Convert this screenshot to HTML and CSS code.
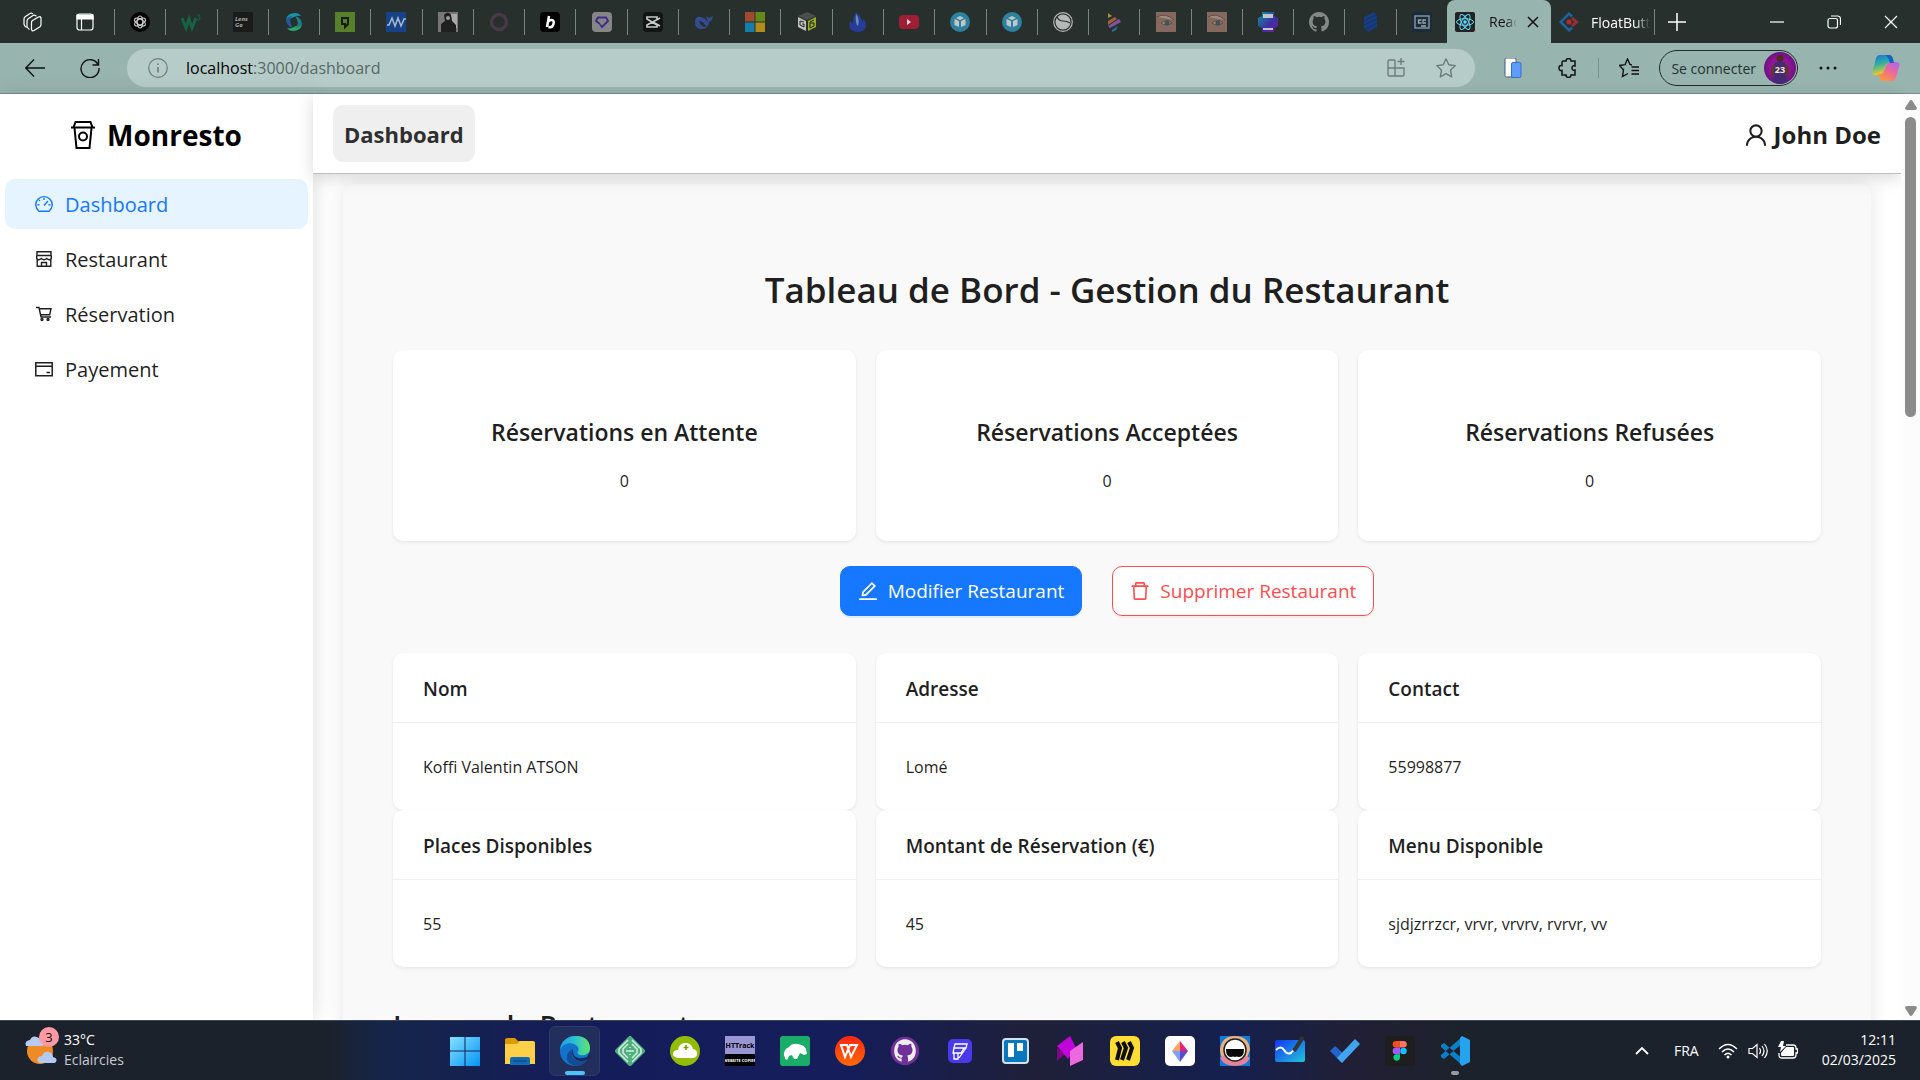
FILE: index.html
```html
<!DOCTYPE html>
<html lang="fr">
<head>
<meta charset="utf-8">
<meta name="viewport" content="width=device-width, initial-scale=1">
<title>Monresto - Dashboard</title>
<link rel="stylesheet" href="styles.css">
</head>
<body>
<div class="screen">

  <!-- Browser tab strip -->
  <header class="tabstrip">
    <div class="strip-tools">
      <button class="icon-btn" aria-label="Espaces de travail"><svg viewBox="0 0 20 20" class="i20 line"><path d="M3.500 15.500Q1 14 1 12V7q0-1.500 1.500-2.500L7 1.500q1-.7 2.500 0l.5.500M6.500 17.500Q4 16 4 14V9q0-1.500 1.500-2.500L10 3.500q1-.7 2.500 0l1 .7M9.500 8.500L15.500 5q2.500-1 2.500 1.500v6q0 1.500-1 2.200L11 18.500q-2.500 1-2.500-1.500v-6.500q0-1.200 1-2z"/></svg></button>
      <button class="icon-btn" aria-label="Onglets"><svg viewBox="0 0 20 20" class="i20 line"><rect x="2" y="2" width="16" height="16" rx="2.500"/><path d="M2 3h16v4H2z" fill="currentColor"/><path d="M6.500 7v11"/></svg></button>
    </div>
    <nav class="pinned" aria-label="Onglets épinglés">
      <a href="#"><svg viewBox="0 0 20 20" class="i20"><circle cx="10" cy="10" r="10" fill="#000"/><g fill="none" stroke="#ccc" stroke-width="1.200"><ellipse cx="10" cy="10" rx="2.800" ry="6"/><ellipse cx="10" cy="10" rx="2.800" ry="6" transform="rotate(60 10 10)"/><ellipse cx="10" cy="10" rx="2.800" ry="6" transform="rotate(120 10 10)"/></g></svg></a>
      <a href="#"><svg viewBox="0 0 20 20" class="i20"><path d="M1 6l4 10 3-9 3 9 4-10" fill="none" stroke="#176246" stroke-width="3"/><path d="M16 3h3l-1.500 2q2 0 1.500 2t-3 1" fill="none" stroke="#176246"/></svg></a>
      <a href="#"><svg viewBox="0 0 20 20" class="i20"><path fill="#191c1b" d="M0 0h20v20H0z"/><text x="2" y="9" class="fav-word">Lens</text><text x="2" y="15" class="fav-word">Go</text></svg></a>
      <a href="#"><svg viewBox="0 0 20 20" class="i20"><path d="M2 8Q3 1 11 1q4 0 6 3-4-1-7 1-4 2-8 3z" fill="#1a93a5"/><path d="M2 7q3-3 6-3-4 5 1 12-7-2-7-9z" fill="#2358a0"/><path d="M18 12q-1 7-9 7-4 0-6-3 4 1 7-1 4-2 8-3z" fill="#2aa568"/><path d="M18 13q-3 3-6 3 4-5-1-12 7 2 7 9z" fill="#1b7f86"/></svg></a>
      <a href="#"><svg viewBox="0 0 20 20" class="i20"><path fill="#587f29" d="M0 0h20v20H0z"/><path d="M7 6h6v6l-3 3v-3H7z" fill="none" stroke="#141c10" stroke-width="2"/></svg></a>
      <a href="#"><svg viewBox="0 0 20 20" class="i20"><path fill="#174285" d="M0 0h20v20H0z"/><path d="M1 13h2l3-7 3 8 3-8 3 8 3-7h2" fill="none" stroke="#a9b8cd" stroke-width="1.500"/></svg></a>
      <a href="#"><svg viewBox="0 0 20 20" class="i20"><path fill="#777" d="M0 0h20v20H0z"/><path fill="#aaa" d="M13 2h6v14h-4z"/><path fill="#202020" d="M6 3q4-5 7 0l1 6 4 4v7H3v-8l4-3z"/><circle cx="10" cy="6" r="2" fill="#999"/></svg></a>
      <a href="#"><svg viewBox="0 0 20 20" class="i20"><circle cx="10" cy="10" r="7.500" fill="none" stroke="#493847" stroke-width="3.500"/></svg></a>
      <a href="#"><svg viewBox="0 0 20 20" class="i20"><rect width="20" height="20" rx="4" fill="#000"/><path d="M9 4L7 15M7.500 11q1-3 4-3t2 4-5 3" fill="none" stroke="#fff" stroke-width="2.500"/></svg></a>
      <a href="#"><svg viewBox="0 0 20 20" class="i20"><rect width="20" height="20" rx="4" fill="#858786"/><path d="M8 12l-4-3 2-3.500h8L16 9l-6 6-2-2.500" fill="none" stroke="#412c88" stroke-width="2"/></svg></a>
      <a href="#"><svg viewBox="0 0 20 20" class="i20"><rect width="20" height="20" rx="4" fill="#111514"/><path d="M17 6l-13 7v2h10v-2L4 7V5h10v2M10 10l7 4" fill="none" stroke="#c6c8c7" stroke-width="1.700"/></svg></a>
      <a href="#"><svg viewBox="0 0 20 20" class="i20"><path d="M1 10q0-6 6-5 4 1 7 5l-2-6 3 2 4-2-1 4-3 2q-1 8-9 7-5-1-5-7z" fill="#344a91"/><path d="M5 9q5 0 7 6-5 0-7-6z" fill="#27302d"/></svg></a>
      <a href="#"><svg viewBox="0 0 20 20" class="i20"><path fill="#a24932" d="M0 0h9.500v9.500H0z"/><path fill="#64881a" d="M10.500 0H20v9.500h-9.500z"/><path fill="#157faa" d="M0 10.500h9.500V20H0z"/><path fill="#b58b19" d="M10.500 10.500H20V20h-9.500z"/></svg></a>
      <a href="#"><svg viewBox="0 0 20 20" class="i20"><path d="M1 4l9-4 9 4-9 4z" fill="#4c4f4e"/><path d="M1 5l8 4v10l-8-4z" fill="#bfc1bf"/><path d="M19 5l-8 4v10l8-4z" fill="#9bad23"/><path d="M7 10l-4-1v4l4 2v-3H5M17 8l-4 2v6l4-2v-3h-4" fill="none" stroke="#202724"/></svg></a>
      <a href="#"><svg viewBox="0 0 20 20" class="i20"><path d="M8 0q6 5 6 10 1-2 2-3 6 12-6 13-11 0-8-11 2 1 3 3 0-7 3-12z" fill="#263c98"/><path d="M8 2q4 5 2 12-3-2-2-12z" fill="#648cbd"/></svg></a>
      <a href="#"><svg viewBox="0 0 20 20" class="i20"><rect y="3" width="20" height="14" rx="4" fill="#9f1e36"/><path d="M8 7l4 3-4 3z" fill="#ddd"/></svg></a>
      <a href="#"><svg viewBox="0 0 20 20" class="i20"><circle cx="10" cy="10" r="10" fill="#2f7f9e"/><path d="M10 4l4 2-4 2-4-2zM4.500 7L9 9v6l-4.500-2zM15.500 7L11 9v6l4.500-2z" fill="#bfc7ca"/></svg></a>
      <a href="#"><svg viewBox="0 0 20 20" class="i20"><circle cx="10" cy="10" r="10" fill="#2f7f9e"/><path d="M10 4l4 2-4 2-4-2zM4.500 7L9 9v6l-4.500-2zM15.500 7L11 9v6l4.500-2z" fill="#bfc7ca"/></svg></a>
      <a href="#"><svg viewBox="0 0 20 20" class="i20"><circle cx="10" cy="10" r="9.300" fill="none" stroke="#b6b8b7" stroke-width="1.200"/><circle cx="10" cy="10" r="7.500" fill="#b6b8b7"/><path d="M4 5q2 4 6 4t7 2" fill="none" stroke="#27302d" stroke-width="1.200"/></svg></a>
      <a href="#"><svg viewBox="0 0 20 20" class="i20"><path d="M4 1l4 3-4 2z" fill="#a48e37"/><path d="M4 9l7-4 2 2-9 6z" fill="#a55f38"/><path d="M4 14l11-7 2 3-11 6z" fill="#8353a0"/><path d="M8 18l6-4-2 4-4 2z" fill="#386da0"/></svg></a>
      <a href="#"><svg viewBox="0 0 20 20" class="i20"><path fill="#85695e" d="M0 0h20v20H0z"/><path d="M1 5q8-5 17 3M5 11q6-5 11 0-6 4-11 0" fill="#a08a80" stroke="#5f4c45"/><circle cx="11" cy="11" r="2.500" fill="#3b5558"/></svg></a>
      <a href="#"><svg viewBox="0 0 20 20" class="i20"><path fill="#85695e" d="M0 0h20v20H0z"/><path d="M1 5q8-5 17 3M5 11q6-5 11 0-6 4-11 0" fill="#a08a80" stroke="#5f4c45"/><circle cx="11" cy="11" r="2.500" fill="#3b5558"/></svg></a>
      <a href="#"><svg viewBox="0 0 20 20" class="i20"><defs><linearGradient id="printer" x2="1" y2="1"><stop stop-color="#079998"/><stop offset=".6" stop-color="#412ca5"/><stop offset="1" stop-color="#7022a0"/></linearGradient></defs><path d="M4 0h12v4l4 2v8l-4 2v4H4v-4l-4-2V6l4-2z" fill="url(#printer)"/><path d="M5 2h10v4H5zM5 16h10v2H5z" fill="#c0c4cd"/></svg></a>
      <a href="#"><svg viewBox="0 0 16 16" class="i20"><path fill="#858987" d="M8 0C3.580 0 0 3.580 0 8c0 3.540 2.290 6.530 5.470 7.590.4.070.55-.17.55-.38 0-.19-.01-.82-.01-1.490-2.010.37-2.530-.49-2.690-.94-.09-.23-.48-.94-.82-1.130-.28-.15-.68-.52-.01-.53.63-.01 1.080.58 1.230.82.72 1.210 1.870.87 2.330.66.07-.52.28-.87.51-1.070-1.780-.2-3.640-.89-3.640-3.950 0-.87.31-1.590.82-2.150-.08-.2-.36-1.020.08-2.120 0 0 .67-.21 2.200.82a7.600 7.600 0 014 0c1.530-1.040 2.200-.82 2.200-.82.44 1.100.16 1.920.08 2.120.51.56.82 1.270.82 2.150 0 3.070-1.870 3.750-3.650 3.950.29.25.54.73.54 1.480 0 1.070-.01 1.930-.01 2.200 0 .21.15.46.55.38A8 8 0 0016 8c0-4.420-3.580-8-8-8z"/></svg></a>
      <a href="#"><svg viewBox="0 0 20 20" class="i20"><path d="M3 5l10-5 3 4v11l-9 5-4-4z" fill="#173d80"/><path d="M3 9l12-6M3 13l13-6M4 17l12-6" stroke="#123468"/></svg></a>
      <a href="#"><svg viewBox="0 0 20 20" class="i20"><path fill="#1a2c3c" d="M0 0h20v20H0z"/><path d="M3 4h14v12H3z" fill="none" stroke="#858f96" stroke-width="1.500"/><path d="M9.500 8h-3v3h3M14 8h-3v3h3M9 14h5" fill="none" stroke="#9da4a9" stroke-width="1.300"/></svg></a>
    </nav>
    <div class="tab tab-active">
      <svg viewBox="0 0 20 20" class="i20"><rect width="20" height="20" rx="2" fill="#222"/><g fill="none" stroke="#61dafb"><ellipse cx="10" cy="10" rx="8.500" ry="3.300"/><ellipse cx="10" cy="10" rx="8.500" ry="3.300" transform="rotate(60 10 10)"/><ellipse cx="10" cy="10" rx="8.500" ry="3.300" transform="rotate(120 10 10)"/></g><circle cx="10" cy="10" r="1.800" fill="#61dafb"/></svg>
      <span class="tab-title fade">React App</span>
      <button class="icon-btn" aria-label="Fermer l'onglet"><svg viewBox="0 0 12 12" class="i12 line"><path d="M1 1l10 10M11 1L1 11" stroke-width="1.500"/></svg></button>
    </div>
    <div class="tab tab-next">
      <svg viewBox="0 0 20 20" class="i20"><path d="M14 3.500L10 0 0 10l10 10 4-3.500-2-2-2 2L3.500 10 10 3.500l2 2z" fill="#1e63a0"/><path d="M14 5l6 5-6 5-2-2 3-3-3-3z" fill="#8f3039"/><circle cx="10" cy="10" r="2.600" fill="#b02c32"/></svg>
      <span class="tab-title fade">FloatButton</span>
    </div>
    <button class="icon-btn new-tab" aria-label="Nouvel onglet"><svg viewBox="0 0 18 18" class="i18 line"><path d="M9 0v18M0 9h18" stroke-width="1.500"/></svg></button>
    <div class="window-controls">
      <button class="icon-btn" aria-label="Réduire"><svg viewBox="0 0 14 14" class="i14 line"><path d="M0 7h14"/></svg></button>
      <button class="icon-btn" aria-label="Restaurer"><svg viewBox="0 0 14 14" class="i14 line"><rect x="1" y="3.500" width="9.500" height="9.500" rx="2"/><path d="M4 1h6.500q3 0 3 3v6"/></svg></button>
      <button class="icon-btn" aria-label="Fermer"><svg viewBox="0 0 14 14" class="i14 line"><path d="M1 1l12 12M13 1L1 13"/></svg></button>
    </div>
  </header>

  <!-- Address bar -->
  <div class="toolbar">
    <div class="nav-buttons">
      <button class="icon-btn" aria-label="Précédent"><svg viewBox="0 0 20 20" class="i20 line"><path d="M9 1.500L.8 10 9 18.500M1 10h19" stroke-width="1.400"/></svg></button>
      <button class="icon-btn" aria-label="Actualiser"><svg viewBox="0 0 20 20" class="i20 line"><path d="M18.500 1v6h-6M18 6.500A9 9 0 1 0 19 10" stroke-width="1.400"/></svg></button>
    </div>
    <div class="address">
      <svg viewBox="0 0 20 20" class="i20 line"><circle cx="10" cy="10" r="9.300"/><path d="M10 9v5.500M10 5.500v1.500" stroke-width="1.600"/></svg>
      <a class="url" href="#"><span class="url-host">localhost</span>:3000/dashboard</a>
      <button class="icon-btn" aria-label="Installer l'application"><svg viewBox="0 0 20 20" class="i20 line"><path d="M9 2H3.500Q2 2 2 3.500v13Q2 18 3.500 18H16.500q1.500 0 1.500-1.500V10H2M9 2v16M15 0v7M11.500 3.500h7" stroke-width="1.400"/></svg></button>
      <button class="icon-btn star" aria-label="Favori"><svg viewBox="0 0 20 20" class="i20 line"><path d="M10 .8l2.800 6 6.500.8-4.800 4.600 1.200 6.600L10 15.600l-5.700 3.200 1.200-6.600L.7 7.600l6.500-.8z" stroke-linejoin="round" stroke-width="1.400"/></svg></button>
    </div>
    <div class="extensions">
      <button class="icon-btn" aria-label="Mobile"><svg viewBox="0 0 20 20" class="i20"><rect x="2" y="0" width="11" height="19" rx="1.500" fill="#fff" stroke="#3f5d78"/><rect x="8.500" y="4.500" width="9.500" height="15" rx="1.500" fill="#5c9dfb" stroke="#3a6ec4"/></svg></button>
      <button class="icon-btn" aria-label="Extensions"><svg viewBox="0 0 20 20" class="i20 line"><path d="M5 3h3q0-2.500 2.500-2.500T13 3h4v5q-3-1-3 2t3 2v5h-4q0 2.500-2.500 2.500T8 17H4v-4.500Q1 13 1 10t3-2.500V4z" stroke-width="1.500"/></svg></button>
      <span class="divider"></span>
      <button class="icon-btn" aria-label="Favoris"><svg viewBox="0 0 20 20" class="i20 line"><path d="M13 7l-2-.5L8.500 1 6 6.700l-5.500.8 4 4.200-1 6.800 5.500-3M12.500 9H20M12.500 12.500H20M12.500 16H20" stroke-width="1.400"/></svg></button>
    </div>
    <button class="profile">Se connecter
      <svg viewBox="0 0 32 32" class="avatar"><defs><radialGradient id="glow"><stop stop-color="#c717bd"/><stop offset="1" stop-color="#6d1180"/></radialGradient></defs><circle cx="16" cy="16" r="16" fill="url(#glow)"/><path d="M7 15l5-5h8l5 5-1 11-3-4H11l-3 4z" fill="#61372c"/><path d="M11 10h10l2 20q-7 3-14 0z" fill="#442b78"/><circle cx="16" cy="6.500" r="3.500" fill="#4c2921"/><text x="16" y="21" text-anchor="middle" class="jersey">23</text></svg>
    </button>
    <button class="icon-btn more" aria-label="Paramètres"><svg viewBox="0 0 18 4" class="dots"><circle cx="2" cy="2" r="1.500"/><circle cx="9" cy="2" r="1.500"/><circle cx="16" cy="2" r="1.500"/></svg></button>
    <button class="icon-btn copilot" aria-label="Copilot"><svg viewBox="0 0 28 28" class="i28"><defs><linearGradient id="cpa" x2=".3" y2="1"><stop stop-color="#1473d9"/><stop offset=".5" stop-color="#32afa1"/><stop offset="1" stop-color="#f5cf20"/></linearGradient><linearGradient id="cpb" x1="1" x2=".3" y2="1"><stop stop-color="#9d6cf7"/><stop offset=".5" stop-color="#ec67a0"/><stop offset="1" stop-color="#fb973e"/></linearGradient></defs><path d="M8 1h9q3 0 4 4l1 4h-5q-3 0-4 4l-2 6q-1 2-4 2H3q-4 0-2-5L4 4q1-3 4-3z" fill="url(#cpa)"/><path d="M20 27h-9q-3 0-4-4l-1-3q4 1 6-3l3-7q1-2 4-2h5q5 0 3 5l-3 10q-1 4-4 4z" fill="url(#cpb)"/><path d="M13 1h4q3 0 4 4l1 4h-4q-2-7-5-8z" fill="#1760c4"/></svg></button>
  </div>

  <!-- Web application -->
  <div class="app">
    <aside class="sidebar">
      <div class="brand">
        <svg viewBox="0 0 24 28" class="brand-icon"><path d="M4.500 1h15l2 5.500h-19zM0 6.500h24M3.500 7l2 20h13l2-20" fill="none" stroke="currentColor" stroke-width="2"/><circle cx="12" cy="15.500" r="4" fill="none" stroke="currentColor" stroke-width="2"/></svg>
        <span>Monresto</span>
      </div>
      <nav class="menu">
        <a class="menu-item selected" href="#"><svg viewBox="0 0 18 18" class="i18 line"><path d="M4 16.300A8.200 8.200 0 1 1 14 16.300z" stroke-width="1.400"/><path d="M9 3v2M4 5l1 1M2.500 9.700h2M13.500 9.700h2M9 10.500L13 6" stroke-width="1.400"/></svg>Dashboard</a>
        <a class="menu-item" href="#"><svg viewBox="0 0 18 18" class="i18 line"><path d="M2 1.700h14v3.800H2zM1.700 5.500v3q2 2.500 4.500 0 2.800 2.500 5.600 0 2.500 2.500 4.500 0v-3M2.200 9v7.300h13.600V9M6.500 16v-3.500h5V16" stroke-width="1.400"/></svg>Restaurant</a>
        <a class="menu-item" href="#"><svg viewBox="0 0 18 18" class="i18 line"><path d="M1 2.500h3l2 9.500h10M4.500 3.700H16l-1.300 6H5.500" stroke-width="1.400"/><circle cx="7" cy="14.500" r="1" stroke-width="1.400"/><circle cx="13" cy="14.500" r="1" stroke-width="1.400"/></svg>Réservation</a>
        <a class="menu-item" href="#"><svg viewBox="0 0 18 18" class="i18 line"><path d="M.8 2.800h16.400v13H.8zM1 6.300h16M11.500 12.500h3.500" stroke-width="1.500"/></svg>Payement</a>
      </nav>
    </aside>

    <div class="main">
      <header class="app-header">
        <button class="crumb">Dashboard</button>
        <a class="user" href="#"><svg viewBox="64 64 896 896" class="user-icon"><path d="M858.500 763.600a374 374 0 00-80.600-119.500 375.630 375.630 0 00-119.500-80.600c-.4-.2-.8-.3-1.200-.5C719.500 518 760 444.700 760 362c0-137-111-248-248-248S264 225 264 362c0 82.700 40.500 156 102.800 201.100-.4.2-.8.3-1.200.5-44.800 18.900-85 46-119.500 80.600a375.630 375.630 0 00-80.600 119.500A371.700 371.700 0 00136 901.800a8 8 0 008 8.200h60c4.400 0 7.900-3.500 8-7.800 2-77.200 33-149.500 87.800-204.300 56.700-56.700 132-87.900 212.200-87.900s155.500 31.200 212.200 87.900C779 752.700 810 825 812 902.200c.1 4.400 3.600 7.800 8 7.800h60a8 8 0 008-8.200c-1-47.800-10.900-94.300-29.500-138.200zM512 534c-45.900 0-89.100-17.900-121.600-50.400S340 407.900 340 362c0-45.900 17.900-89.100 50.400-121.600S466.100 190 512 190s89.100 17.900 121.600 50.400S684 316.100 684 362c0 45.900-17.900 89.100-50.400 121.600S557.900 534 512 534z"/></svg>John Doe</a>
      </header>

      <main class="content">
        <section class="panel">
          <h1>Tableau de Bord - Gestion du Restaurant</h1>
          <div class="cards">
            <article class="card stat"><h2>Réservations en Attente</h2><p>0</p></article>
            <article class="card stat"><h2>Réservations Acceptées</h2><p>0</p></article>
            <article class="card stat"><h2>Réservations Refusées</h2><p>0</p></article>
          </div>
          <div class="actions">
            <button class="btn btn-primary"><svg viewBox="64 64 896 896" class="i20"><path d="M257.700 752c2 0 4-.2 6-.5L431.900 722c2-.4 3.900-1.300 5.300-2.800l423.900-423.900a9.960 9.960 0 000-14.100L694.900 114.900c-1.900-1.900-4.400-2.900-7.100-2.900s-5.200 1-7.100 2.900L256.800 538.800c-1.500 1.500-2.400 3.300-2.800 5.300l-29.500 168.200a33.500 33.500 0 009.400 29.800c6.600 6.400 14.900 9.900 23.800 9.900zm67.400-174.400L687.800 215l73.300 73.300-362.700 362.600-88.900 15.700 15.600-89zM880 836H144c-17.700 0-32 14.300-32 32v36c0 4.400 3.600 8 8 8h784c4.400 0 8-3.600 8-8v-36c0-17.700-14.300-32-32-32z"/></svg>Modifier Restaurant</button>
            <button class="btn btn-danger"><svg viewBox="64 64 896 896" class="i20"><path d="M360 184h-8c4.400 0 8-3.600 8-8v8h304v-8c0 4.400 3.600 8 8 8h-8v72h72v-80c0-35.300-28.700-64-64-64H352c-35.300 0-64 28.700-64 64v80h72v-72zm504 72H160c-17.700 0-32 14.300-32 32v32c0 4.400 3.600 8 8 8h60.400l24.700 523c1.600 34.100 29.800 61 63.900 61h454c34.200 0 62.300-26.800 63.900-61l24.700-523H888c4.400 0 8-3.600 8-8v-32c0-17.700-14.300-32-32-32zM731.300 840H292.700l-24.200-512h487l-24.200 512z"/></svg>Supprimer Restaurant</button>
          </div>
          <div class="cards details">
            <article class="card"><h3>Nom</h3><p>Koffi Valentin ATSON</p></article>
            <article class="card"><h3>Adresse</h3><p>Lomé</p></article>
            <article class="card"><h3>Contact</h3><p>55998877</p></article>
            <article class="card"><h3>Places Disponibles</h3><p>55</p></article>
            <article class="card"><h3>Montant de Réservation (€)</h3><p>45</p></article>
            <article class="card"><h3>Menu Disponible</h3><p>sjdjzrrzcr, vrvr, vrvrv, rvrvr, vv</p></article>
          </div>
          <h2 class="gallery-title">Images du Restaurant</h2>
        </section>
      </main>
    </div>

    <div class="scrollbar" aria-hidden="true">
      <svg viewBox="0 0 12 10" class="arrow"><path d="M6 0q1 0 1.500 1L12 8q0 2-2 2H2Q0 10 0 8l4.500-7Q5 0 6 0z"/></svg>
      <div class="track"><div class="thumb"></div></div>
      <svg viewBox="0 0 12 10" class="arrow"><path d="M6 10q1 0 1.500-1L12 2q0-2-2-2H2Q0 0 0 2l4.500 7Q5 10 6 10z"/></svg>
    </div>
  </div>

  <!-- Windows taskbar -->
  <footer class="taskbar">
    <div class="weather">
      <div class="weather-icon">
        <svg viewBox="0 0 34 34"><circle cx="15" cy="20" r="13" fill="#ef8b24"/><path d="M1 15q-2-5 4-6 2-5 7-3 3 1 3 4 5 1 3 5z" fill="#b7caf2"/><path d="M15 32q-4-1-2-5 1-2 4-2 2-5 7-4 4 1 4 5 5 1 3 5-1 1-2 1z" fill="#b3c9f0"/></svg>
        <span class="badge">3</span>
      </div>
      <div class="weather-text"><span>33°C</span><span class="muted">Eclaircies</span></div>
    </div>
    <nav class="apps" aria-label="Applications">
      <a href="#"><svg viewBox="0 0 30 30" class="i30"><defs><linearGradient id="win" x2="1" y2="1"><stop stop-color="#84e1ff"/><stop offset="1" stop-color="#0594f5"/></linearGradient></defs><path d="M0 1h14.500v13.500H0zM15.500 1H30v13.500H15.500zM0 15.500h14.500V30H0zM15.500 15.500H30V30H15.500z" fill="url(#win)"/></svg></a>
      <a href="#"><svg viewBox="0 0 30 30" class="i30"><path d="M0 4q0-2 2-2h8l3 3h15v10H0z" fill="#d99a06"/><path d="M0 8h12l3-3h13q2 0 2 2v21H0z" fill="#ffcf48"/><path d="M5 29v-6q0-2 2-2h16q2 0 2 2v6z" fill="#126bb4"/><path d="M8 25h14" stroke="#0c4379"/></svg></a>
      <a href="#" class="running"><svg viewBox="0 0 30 30" class="i30"><defs><linearGradient id="edge" x2="1"><stop stop-color="#1c9de6"/><stop offset=".5" stop-color="#2bc3cf"/><stop offset="1" stop-color="#63e46a"/></linearGradient></defs><circle cx="15" cy="15" r="15" fill="#1173cc"/><path d="M0 14C1-4 30-5 30 12c0 7-9 9-12 6-2-2 2-3 0-7C14 5 3 6 0 14z" fill="url(#edge)"/><path d="M13 13c-4 8 4 15 14 10q1 0 0 1-5 6-12 6-10-3-8-11 1-4 6-6z" fill="#124d93"/><path d="M13 13q-1 7 5 9 4 1 9-1l3-5v6l-4 2Q17 27 13 20q-2-4 0-7z" fill="#17275a"/></svg></a>
      <a href="#"><svg viewBox="0 0 30 30" class="i30"><path d="M15 2l13 13-13 13L2 15z" fill="#4eb07e" stroke="#4eb07e" stroke-width="4" stroke-linejoin="round"/><path d="M13 4L4 13v4l9 9M17 4l9 9v4l-9 9M13 8l-5 5v4l5 5M17 8l5 5v4l-5 5M11 15h8M15 11v1M15 18v1" fill="none" stroke="#d6eee1" stroke-width="1.500"/></svg></a>
      <a href="#"><svg viewBox="0 0 30 30" class="i30"><circle cx="15" cy="15" r="15" fill="#92bd04"/><path d="M8 22q-6-1-5-5 1-3 5-3 1-8 9-7 5 1 6 6 5 1 4 6-1 3-4 3z" fill="#fff"/><path d="M16 9v5M13.500 11.500h5" stroke="#7a9f02" stroke-width="1.500"/></svg></a>
      <a href="#"><svg viewBox="0 0 30 30" class="i30"><path fill="#9a96d4" d="M0 0h30v18H0z"/><path fill="#000" d="M0 18h30v12H0z"/><text x="15" y="12" text-anchor="middle" class="ht-top">HTTrack</text><text x="15" y="26" text-anchor="middle" class="ht-bottom">WEBSITE COPIER</text></svg></a>
      <a href="#"><svg viewBox="0 0 30 30" class="i30"><rect width="30" height="30" rx="3" fill="#19ad68"/><path d="M4 22q-1-9 5-11 3-4 9-3 6 1 8 5l1 5-3 1-4-2-3 6h-3l-2-4-3 1-2 4-2-1v-4z" fill="#fff"/></svg></a>
      <a href="#"><svg viewBox="0 0 30 30" class="i30"><defs><linearGradient id="wps" y2="1" x2="0"><stop stop-color="#ff2512"/><stop offset="1" stop-color="#ff6a04"/></linearGradient></defs><circle cx="15" cy="15" r="15" fill="url(#wps)"/><path d="M6 9h6l4 12 6-12h-7l-5 12z" fill="none" stroke="#fff" stroke-width="2"/></svg></a>
      <a href="#"><svg viewBox="-1 -1 18 18" class="i30"><circle cx="8" cy="8" r="8.500" fill="#71309a"/><path fill="#eee" d="M8 1C4.100 1 1.500 4 1.500 8c0 3 1.500 5.500 4.500 6.500v-2q-2 .3-2.700-1.500l1 .1q1 1.500 2 .6.100-.6.500-.9C4.500 10.500 3.500 9.500 3.500 7.300q0-1 .7-1.800-.2-1 .1-1.800 1 0 2 .8 1.700-.4 3.400 0 1-.8 2-.8.3.8.100 1.800.7.800.7 1.800c0 2.200-1 3.200-3.300 3.500q.6.500.6 1.400v2.300c3-1 4.700-3.500 4.700-6.500 0-4-2.600-7-6.500-7z"/></svg></a>
      <a href="#"><svg viewBox="0 0 30 30" class="i30"><rect x="3" y="3" width="24" height="24" rx="5" fill="#4a38eb"/><path d="M10 8h12l-1 4H9zM9 12l-1 5h8l3-5M9 17v6h4v-6M21 12l-7 10" fill="none" stroke="#fff" stroke-width="1.300"/></svg></a>
      <a href="#"><svg viewBox="0 0 30 30" class="i30"><rect x="3" y="3" width="25" height="24" rx="3" fill="#0878bd" stroke="#d5e2ee" stroke-width="2"/><path d="M8 7h6v14H8zM17 7h6v8h-6z" fill="#fff"/></svg></a>
      <a href="#"><svg viewBox="0 0 30 30" class="i30"><path d="M2 12v13l8-7z" fill="#7d0787"/><path d="M2 10L15 0l6 12-8 11z" fill="#c004da"/><path d="M15 15l13-9v18l-13 6z" fill="#ec68dd"/></svg></a>
      <a href="#"><svg viewBox="0 0 30 30" class="i30"><rect width="30" height="30" rx="6" fill="#ffdd33"/><path d="M7 6l3 6-3 12M13 6l3 6-4 12M19 6l3 6-4 12" fill="none" stroke="#0d0d16" stroke-width="4"/></svg></a>
      <a href="#"><svg viewBox="0 0 30 30" class="i30"><rect width="30" height="30" rx="5" fill="#fff"/><path d="M15 5v10H7z" fill="#ffa25c"/><path d="M15 5l8 10h-8z" fill="#e22678"/><path d="M7 15h8v11z" fill="#7aa0fa"/><path d="M23 15h-8v11z" fill="#5e4aca"/></svg></a>
      <a href="#"><svg viewBox="0 0 30 30" class="i30"><path fill="#0c7bdc" d="M0 0h30v30H0z"/><path d="M15 0q14 0 15 14l-4 10H4Q0 20 0 13 2 0 15 0z" fill="#efb17c"/><path d="M0 22q14-9 30 0-4 8-15 8T0 22z" fill="#e78195"/><circle cx="15" cy="14" r="11" fill="#fff" stroke="#222" stroke-width="1.500"/><path d="M6 13h18q0 8-5 8-3-1-4 0-2-1-4 0-5 0-5-8z" fill="#080808"/></svg></a>
      <a href="#"><svg viewBox="0 0 30 30" class="i30"><defs><linearGradient id="wb" y2="1"><stop stop-color="#1236f4"/><stop offset="1" stop-color="#22c5da"/></linearGradient></defs><rect y="4" width="30" height="22" rx="2" fill="url(#wb)"/><path d="M1 14q5-5 8 0t7 3q2-3 3-2" fill="none" stroke="#fff" stroke-width="2"/><path d="M28 1L19 15" stroke="#333" stroke-width="4"/></svg></a>
      <a href="#"><svg viewBox="0 0 30 30" class="i30"><path d="M0 15l5-5 9 8-2 9z" fill="#2264cc"/><path d="M7 22L25 3l5 5-18 19z" fill="#42a3ef"/></svg></a>
      <a href="#"><svg viewBox="0 0 30 30" class="i30"><rect width="30" height="30" rx="2" fill="#1e1e1e"/><path d="M15 5h-4a3.300 3.300 0 0 0 0 6.600h4z" fill="#f24e1e"/><path d="M15 5h3.500a3.300 3.300 0 0 1 0 6.600H15z" fill="#ff7262"/><path d="M15 11.600h-4a3.300 3.300 0 0 0 0 6.600h4z" fill="#a259ff"/><circle cx="18.500" cy="15" r="3.300" fill="#1abcfe"/><path d="M15 18.200h-4a3.300 3.300 0 1 0 4 3.300z" fill="#0acf83"/></svg></a>
      <a href="#" class="background-app"><svg viewBox="0 0 30 30" class="i30"><path d="M1 9l3-2 20 17-2 5-21-18zM1 21l3 2L24 6l-2-5L1 19z" fill="#0a81c7"/><path d="M22 0l8 4v22l-8 4-2-2V2z" fill="#26a3ee"/></svg></a>
    </nav>
    <div class="tray">
      <button class="icon-btn" aria-label="Icônes cachées"><svg viewBox="0 0 14 14" class="i14 line"><path d="M1 10l6-6 6 6" stroke-width="1.800"/></svg></button>
      <span class="lang">FRA</span>
      <div class="status">
        <svg viewBox="0 0 20 20" class="i20 line"><path d="M1 8q9-9 18 0M4 11q6-6 12 0M6.500 14q3.500-3.500 7 0" stroke-width="1.500"/><circle cx="10" cy="16" r="1.500" fill="currentColor" stroke="none"/></svg>
        <svg viewBox="0 0 20 20" class="i20 line"><path d="M1 7.500h3.500L9 3.500v13l-4.500-4H1zM11.500 7q2 3 0 6M14 5q4 5 0 10M16.500 3q5.500 7 0 14" stroke-width="1.200"/></svg>
        <svg viewBox="0 0 20 20" class="i20"><path d="M8 4h7q3 0 3 3v1h1.500v4H18v2q0 3-3 3H4q-3 0-3-3v-2" fill="none" stroke="#fff" stroke-width="1.300"/><path d="M8 6h7q1 0 1 1v7q0 1-1 1H4q-1 0-1-1v-2z" fill="#fff"/><path d="M3 0L0 6h3l-1 5 6-6H5l1-5z" fill="#fff"/></svg>
      </div>
      <div class="clock"><span>12:11</span><span>02/03/2025</span></div>
    </div>
  </footer>
</div>
</body>
</html>
```
FILE: styles.css
```css
* { box-sizing: border-box; }

body {
  margin: 0;
  font-family: "Open Sans", "Noto Sans", sans-serif;
  font-size: 16px;
  color: #1f1f1f;
}

h1, h2, h3, p { margin: 0; }
h1, h2, h3 { font-weight: 600; }
a { color: inherit; text-decoration: none; }
svg { display: block; flex: none; }
button { font: inherit; color: inherit; cursor: pointer; }

.screen {
  display: grid;
  grid-template-rows: 43px 51px minmax(0, 1fr) 60px;
  height: 100vh;
  overflow: hidden;
}

/* Icon sizes */
.i12 { width: 12px; height: 12px; }
.i14 { width: 14px; height: 14px; }
.i18 { width: 18px; height: 18px; }
.i20 { width: 20px; height: 20px; }
.i28 { width: 28px; height: 28px; }
.i30 { width: 30px; height: 30px; }
.line { fill: none; stroke: currentColor; stroke-width: 1.2; }
.icon-btn { display: flex; align-items: center; justify-content: center; padding: 0; border: 0; background: none; }

/* Tab strip */
.tabstrip { display: flex; align-items: stretch; background: #27302d; color: #fff; }
.strip-tools { display: flex; gap: 32px; width: 114px; padding-left: 23px; }
.pinned { display: grid; grid-template-columns: repeat(26, minmax(0, 1fr)); width: 1333px; }
.pinned a { display: flex; align-items: center; justify-content: center; height: 26px; margin-top: 9px; border-left: 1px solid #7c8280; }
.fav-word { font: italic 700 6px "Open Sans", sans-serif; fill: #aaa; }
.tab { display: flex; align-items: center; padding: 0 8px; width: 104px; font-size: 14px; }
.tab-title { flex: 1; min-width: 0; margin: 0 10px 0 14px; overflow: hidden; white-space: nowrap; }
.fade { mask-image: linear-gradient(90deg, #000 60%, transparent); }
.tab-active { padding-right: 12px; background: #98b4af; color: #111; border-radius: 8px 8px 0 0; }
.tab-next { border-right: 1px solid #7c8280; height: 26px; margin-top: 9px; }
.tab-next .tab-title { margin: 0 -4px 0 12px; }
.tab-next .fade { mask-image: linear-gradient(90deg, #000 75%, transparent); }
.new-tab { width: 44px; }
.window-controls { display: flex; gap: 43px; margin-left: auto; padding-right: 22px; }

/* Address bar */
.toolbar { display: flex; align-items: center; background: #98b4af; border-bottom: 1px solid #71918c; color: #111; }
.nav-buttons { display: flex; gap: 35px; width: 126px; padding-left: 25px; }
.address {
  display: flex; align-items: center; flex: 1; height: 40px; padding: 0 19px 0 21px;
  background: #b6ccc8; border: 1px solid #9fb4b0; border-radius: 20px; color: #6f7d7a;
}
.url { flex: 1; margin-left: 18px; color: #596866; }
.url-host { color: #000; }
.star { margin-left: 30px; }
.extensions { display: flex; align-items: center; padding: 0 20px 0 27px; gap: 20px; }
.extensions .icon-btn:first-child { margin-right: 15px; }
.divider { width: 1px; height: 20px; background: #71918c; }
.profile {
  display: flex; align-items: center; gap: 8px; height: 36px; padding: 0 1px 0 11px;
  background: none; border: 1px solid #222b29; border-radius: 18px; font-size: 14px; color: #24302d;
}
.avatar { width: 32px; height: 32px; }
.jersey { font: 700 9px "Open Sans", sans-serif; fill: #f5e6b5; }
.more { width: 60px; }
.dots { width: 18px; height: 4px; fill: #111; }
.copilot { margin: 0 20px 0 14px; }

/* Application shell */
.app { display: flex; min-height: 0; background: #fff; }
.sidebar { flex: 0 0 313px; box-shadow: 2px 0 20px rgba(0, 0, 0, .12); }
.brand {
  display: flex; align-items: center; justify-content: center; gap: 12px;
  height: 85px; padding-bottom: 3px; font-size: 28px; font-weight: 700; color: #000;
}
.brand-icon { width: 24px; height: 28px; }
.menu { display: flex; flex-direction: column; gap: 5px; padding: 0 5px; }
.menu-item { display: flex; align-items: center; gap: 12px; height: 50px; padding: 0 30px; border-radius: 10px; font-size: 20px; }
.menu-item.selected { background: #e6f4ff; color: #1677ff; }

.main { flex: 1; min-width: 0; display: flex; flex-direction: column; }
.app-header {
  position: relative; z-index: 1; flex: none;
  display: flex; align-items: center; justify-content: space-between;
  height: 80px; padding: 0 20px; background: #fff; border-bottom: 1px solid #bfbfbf;
  box-shadow: 0 4px 16px rgba(0, 0, 0, .15);
}
.crumb { height: 57px; padding: 0 11px; border: 0; border-radius: 10px; background: #efefef; color: #2f2f2f; font-size: 22px; font-weight: 700; }
.user { display: flex; align-items: center; gap: 6px; padding-top: 2px; font-size: 24px; font-weight: 700; }
.user-icon { width: 24px; height: 24px; fill: currentColor; }
.content { flex: 1; min-height: 0; padding: 10px 30px 0; overflow: hidden; }

/* Dashboard panel */
.panel { min-height: 1000px; padding: 80px 50px 50px; background: #f9f9f9; border-radius: 10px; box-shadow: 0 0 20px rgba(0, 0, 0, .1); }
h1 { font-size: 35px; line-height: 52px; text-align: center; }
.cards { display: grid; grid-template-columns: repeat(3, minmax(0, 1fr)); column-gap: 20px; margin-top: 34px; }
.card { background: #fff; border-radius: 10px; box-shadow: 0 1px 3px rgba(0, 0, 0, .05), 0 2px 5px rgba(0, 0, 0, .04); }
.stat { padding: 65px 30px 46px; text-align: center; }
.stat h2 { font-size: 23px; line-height: 34px; }
.stat p { margin-top: 19px; line-height: 27px; }
.actions { display: flex; justify-content: center; gap: 30px; margin-top: 25px; }
.btn { display: flex; align-items: center; gap: 10px; height: 50px; padding: 0 17px; border: 1px solid; border-radius: 10px; font-size: 19px; }
.btn svg { fill: currentColor; }
.btn-primary { background: #1677ff; border-color: #1677ff; color: #fff; box-shadow: 0 2px 0 rgba(5, 145, 255, .1); }
.btn-danger { background: #fff; border-color: #ff4d4f; color: #ff4d4f; box-shadow: 0 2px 0 rgba(255, 38, 5, .06); }
.details { margin-top: 37px; }
.details .card h3 { padding: 23px 30px 20px; border-bottom: 1px solid #f0f0f0; font-size: 19px; line-height: 26px; }
.details .card p { padding: 31px 30px 30px; line-height: 26px; }
.gallery-title { margin-top: 38px; font-size: 28px; line-height: 42px; }

/* Page scrollbar */
.scrollbar { display: flex; flex-direction: column; align-items: center; gap: 7px; flex: 0 0 19px; padding: 6px 0 4px; background: #fcfcfc; position: relative; z-index: 2; }
.arrow { width: 12px; height: 10px; fill: #8b8b8b; }
.track { flex: 1; width: 11px; }
.thumb { height: 34%; border-radius: 6px; background: #8b8b8b; }

/* Taskbar */
.taskbar {
  position: relative; z-index: 3;
  display: flex; align-items: center; border-top: 1px solid #3a4556; color: #fff; font-size: 14px;
  background: linear-gradient(90deg, #1c222c 17%, #152549 20%, #151c5a 30%, #151d5a 44%, #1f2038 54%, #15204f 64%, #211f33 71%, #1c222c 76%);
}
.weather { display: flex; gap: 5px; width: 437px; padding-left: 25px; }
.weather-icon { position: relative; width: 34px; height: 34px; margin-top: 1px; }
.badge { position: absolute; top: -4px; right: 0; width: 20px; height: 20px; border-radius: 10px; background: #ff99a4; color: #111; font-size: 13px; line-height: 20px; text-align: center; }
.weather-text, .clock { display: flex; flex-direction: column; padding-bottom: 2px; line-height: 20px; }
.muted { color: #c9cbd0; }
.apps { display: flex; }
.apps a { position: relative; display: flex; align-items: center; justify-content: center; width: 55px; height: 50px; }
.running::before { content: ""; position: absolute; inset: 0 2px; border: 1px solid #2f3b66; border-radius: 6px; background: #222e5b; }
.running svg { position: relative; }
.running::after, .background-app::after { content: ""; position: absolute; bottom: 1px; width: 20px; height: 4px; border-radius: 2px; background: #4cc2ff; }
.background-app::after { width: 8px; background: #9a9b9f; }
.ht-top { font: 700 7px "Open Sans", sans-serif; fill: #000; }
.ht-bottom { font: 700 4px "Open Sans", sans-serif; fill: #fff; }
.tray { display: flex; align-items: center; margin-left: auto; padding-right: 24px; }
.lang { margin: 0 19px 0 27px; }
.status { display: flex; gap: 10px; margin-right: 24px; }
.tray > .icon-btn { margin-right: -2px; }
.clock { text-align: right; }
```
